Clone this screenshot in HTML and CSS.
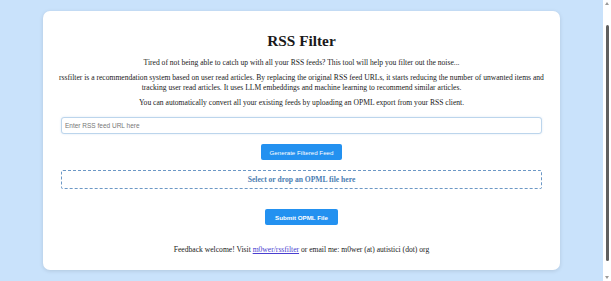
FILE: index.html
```html
<!DOCTYPE html>
<html>
<head>
    <title>RSS Filter</title>
    <link rel="stylesheet" href="styles.css">
</head>
<body>
    <div class="container">
        <h1>RSS Filter</h1>
        <p>Tired of not being able to catch up with all your RSS feeds? This tool will help you filter out the noise...</p>
        <p>rssfilter is a recommendation system based on user read articles. By replacing the original RSS feed URLs, it starts reducing the number of unwanted items and tracking user read articles. It uses LLM embeddings and machine learning to recommend similar articles.</p>
        <p>You can automatically convert all your existing feeds by uploading an OPML export from your RSS client.</p>

        <input type="text" id="feedUrl" class="feed-input" placeholder="Enter RSS feed URL here">
        <button class="btn btn-generate">Generate Filtered Feed</button>

        <label for="opmlFile" class="drop-zone">Select or drop an OPML file here</label>
        <input type="file" id="opmlFile" class="file-input" accept=".opml,.xml">
        <button class="btn btn-submit">Submit OPML File</button>

        <p class="footer">Feedback welcome! Visit <a href="#">m0wer/rssfilter</a> or email me: m0wer (at) autistici (dot) org</p>
    </div>

    <div class="scrollbar">
        <span class="scroll-arrow up"></span>
        <span class="scroll-thumb"></span>
        <span class="scroll-arrow down"></span>
    </div>
</body>
</html>
```

FILE: styles.css
```css
html {
    background-color: #c9e2fb;
}
body {
    margin: 0;
    padding: 11px 51px 40px 43px;
    font-family: "Liberation Serif", "Times New Roman", serif;
    font-size: 7.6px;
    color: #1a1a1a;
}
.container {
    display: flex;
    flex-direction: column;
    align-items: center;
    background-color: #ffffff;
    border-radius: 7px;
    box-shadow: 0 1px 4px rgba(0, 0, 0, 0.12);
    padding: 21px 10px 15px;
    text-align: center;
}
h1 {
    font-size: 15.3px;
    margin: 0 0 8px;
}
p {
    margin: 0 0 5px;
    line-height: 10px;
}
.feed-input {
    box-sizing: border-box;
    width: calc(100% - 16px);
    height: 17px;
    margin-top: 4px;
    padding: 0 3px;
    border: 1px solid #bcd5ec;
    border-radius: 3px;
    box-shadow: 0 0 2px rgba(120, 170, 220, 0.3);
    font-family: Arial, "Liberation Sans", sans-serif;
    font-size: 6.5px;
    outline: none;
}
.feed-input::placeholder {
    color: #777;
}
.btn {
    background-color: #2391f0;
    color: #ffffff;
    border: none;
    border-radius: 2px;
    height: 16px;
    padding: 0 9px;
    font-family: Arial, "Liberation Sans", sans-serif;
    font-size: 6.2px;
    cursor: pointer;
}
.btn-generate {
    margin-top: 10px;
}
.btn-submit {
    margin-top: 20px;
    padding: 0 10px;
    font-weight: bold;
}
.drop-zone {
    box-sizing: border-box;
    width: calc(100% - 16px);
    height: 19px;
    margin-top: 10px;
    border: 1px dashed #6c98c6;
    border-radius: 2px;
    display: flex;
    align-items: center;
    justify-content: center;
    color: #4a7db2;
    font-weight: bold;
    cursor: pointer;
}
.file-input {
    display: none;
}
.footer {
    margin: 20px 0 0;
}
.footer a {
    color: #4a3fd0;
}
.scrollbar {
    position: fixed;
    top: 0;
    right: 0;
    width: 8px;
    height: 100%;
    background-color: #ffffff;
    display: flex;
    flex-direction: column;
    align-items: center;
}
.scroll-thumb {
    flex: 1;
    width: 3px;
    margin: 20px 0 15px;
    background-color: #5f5f5f;
    border-radius: 2px;
}
.scroll-arrow {
    width: 0;
    height: 0;
    border-left: 2px solid transparent;
    border-right: 2px solid transparent;
}
.scroll-arrow.up {
    margin-top: 2px;
    border-bottom: 3px solid #9a9a9a;
}
.scroll-arrow.down {
    margin-bottom: 2px;
    border-top: 3px solid #9a9a9a;
}
```
